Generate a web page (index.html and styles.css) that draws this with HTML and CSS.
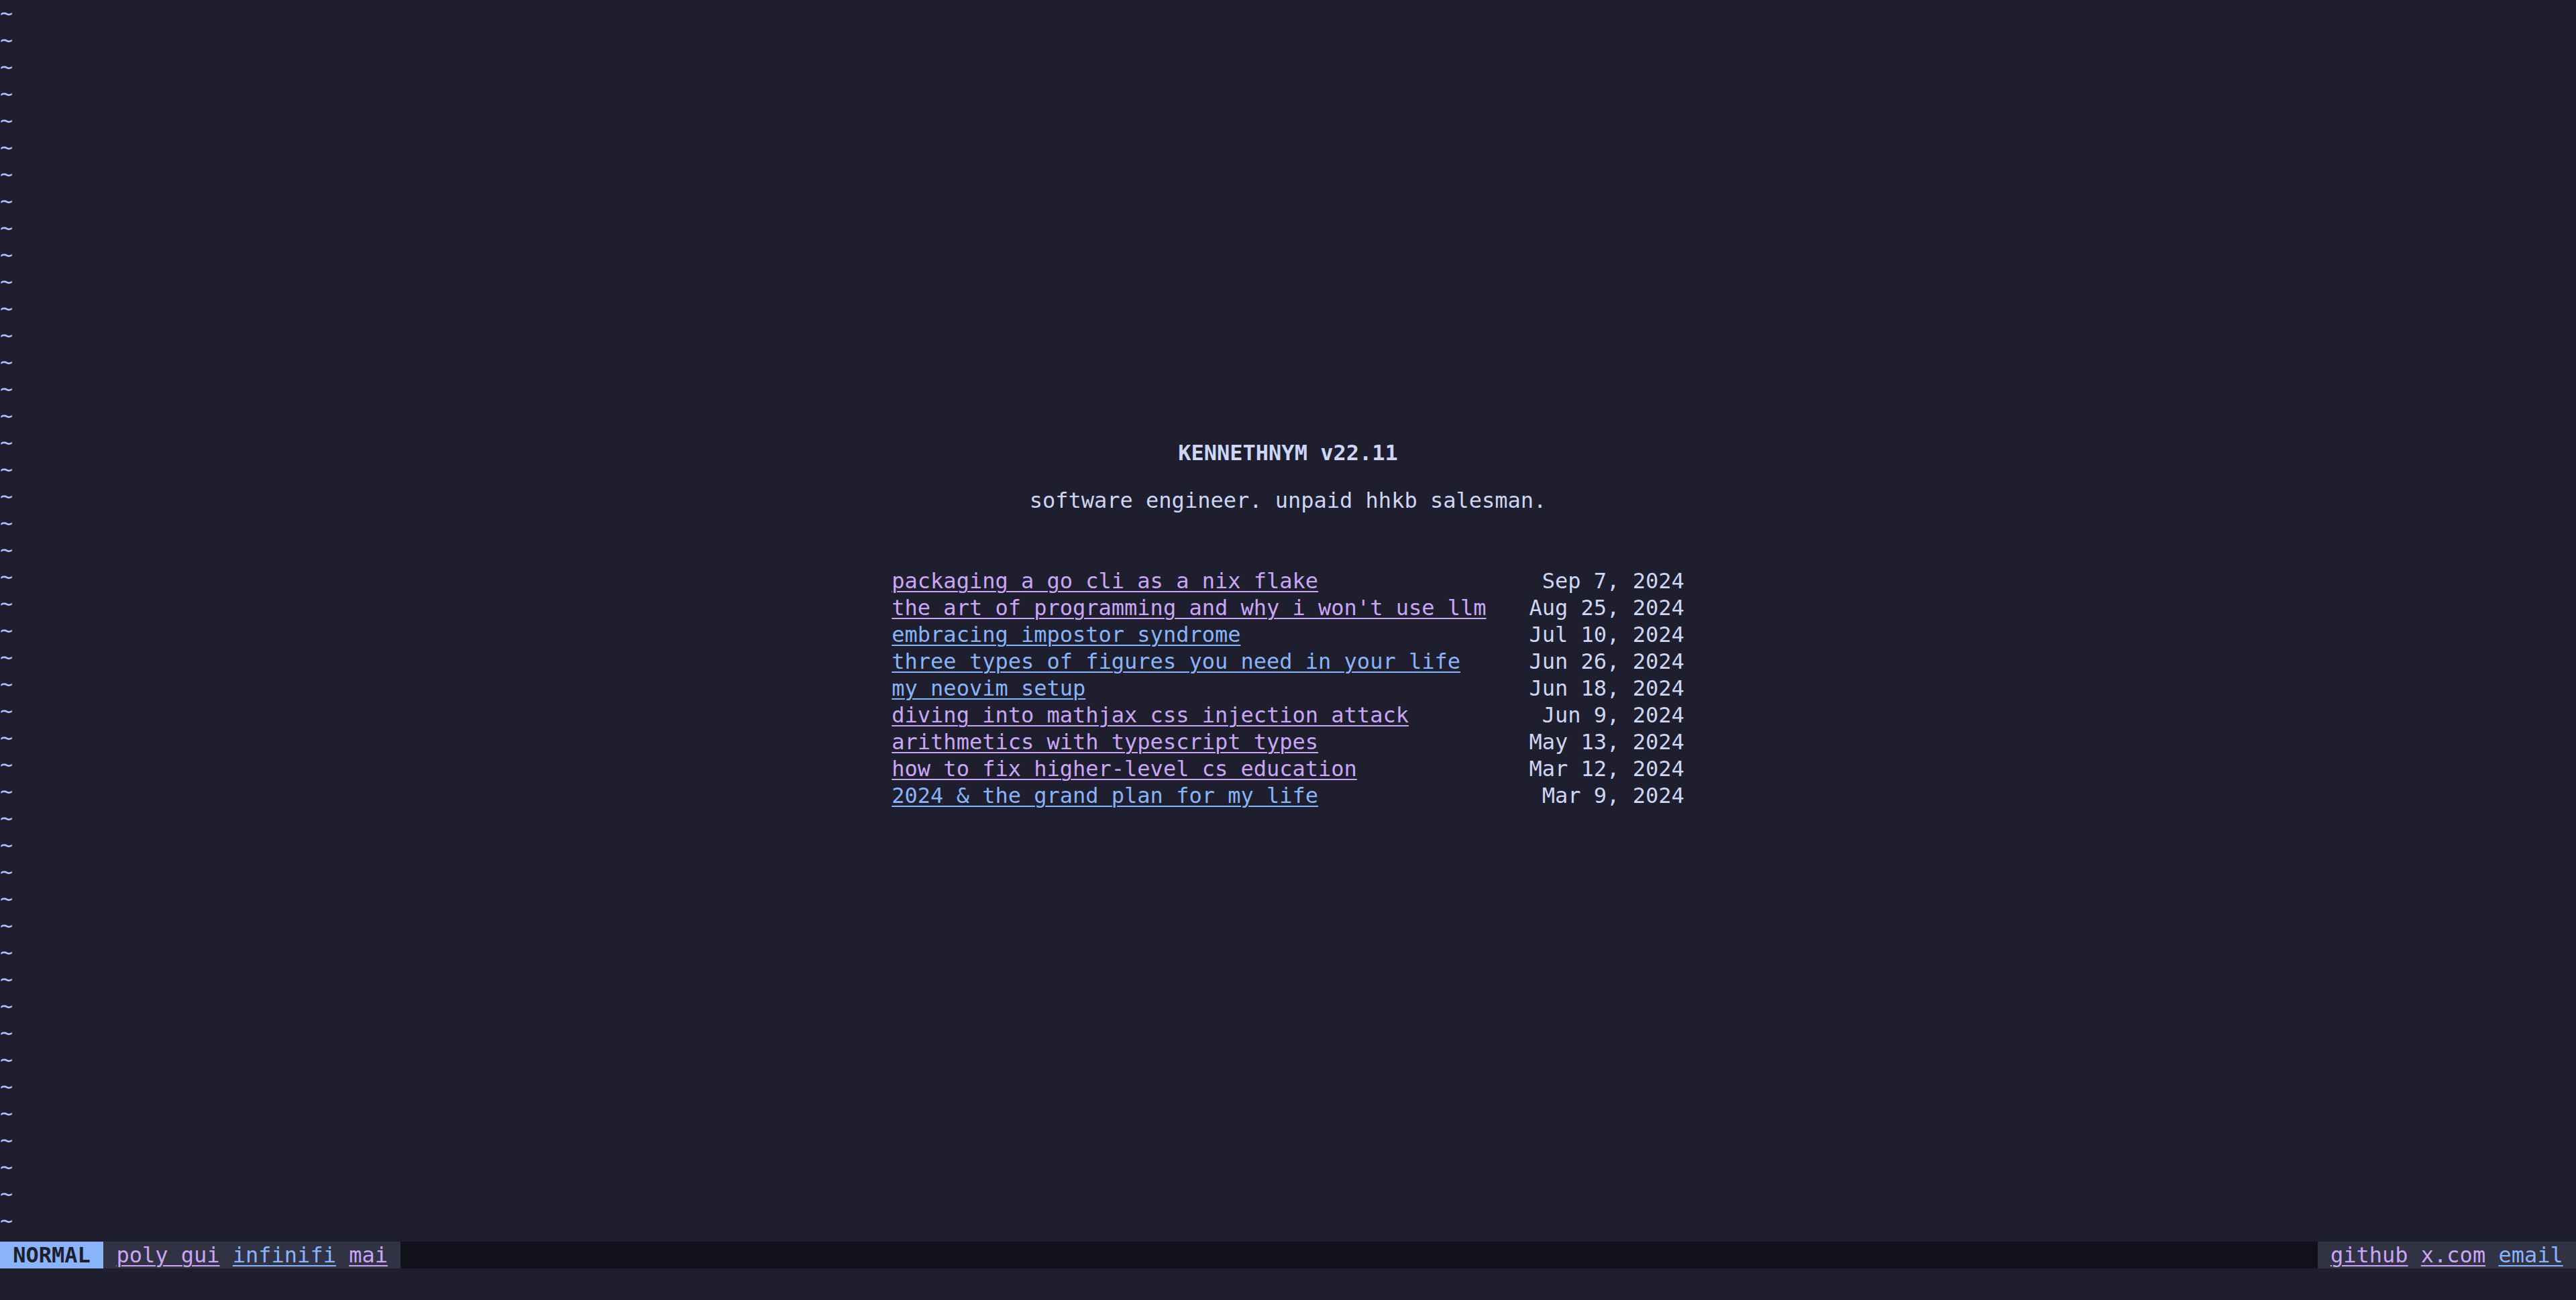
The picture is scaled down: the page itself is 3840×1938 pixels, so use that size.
FILE: index.html
```html
<!DOCTYPE html>
<html lang="en">
<head>
<meta charset="utf-8">
<title>kennethnym</title>
<link rel="stylesheet" href="styles.css">
</head>
<body>
<div class="screen">
  <main class="buffer">
    <div class="gutter">
      <div>~</div><div>~</div><div>~</div><div>~</div><div>~</div><div>~</div><div>~</div><div>~</div><div>~</div><div>~</div>
      <div>~</div><div>~</div><div>~</div><div>~</div><div>~</div><div>~</div><div>~</div><div>~</div><div>~</div><div>~</div>
      <div>~</div><div>~</div><div>~</div><div>~</div><div>~</div><div>~</div><div>~</div><div>~</div><div>~</div><div>~</div>
      <div>~</div><div>~</div><div>~</div><div>~</div><div>~</div><div>~</div><div>~</div><div>~</div><div>~</div><div>~</div>
      <div>~</div><div>~</div><div>~</div><div>~</div><div>~</div><div>~</div>
    </div>
    <div class="content">
      <h1 class="title">KENNETHNYM v22.11</h1>
      <p class="tagline">software engineer. unpaid hhkb salesman.</p>
      <ul class="posts">
        <li><a class="link mauve" href="#">packaging a go cli as a nix flake</a><span class="date">Sep 7, 2024</span></li>
        <li><a class="link mauve" href="#">the art of programming and why i won't use llm</a><span class="date">Aug 25, 2024</span></li>
        <li><a class="link blue" href="#">embracing impostor syndrome</a><span class="date">Jul 10, 2024</span></li>
        <li><a class="link blue" href="#">three types of figures you need in your life</a><span class="date">Jun 26, 2024</span></li>
        <li><a class="link blue" href="#">my neovim setup</a><span class="date">Jun 18, 2024</span></li>
        <li><a class="link mauve" href="#">diving into mathjax css injection attack</a><span class="date">Jun 9, 2024</span></li>
        <li><a class="link mauve" href="#">arithmetics with typescript types</a><span class="date">May 13, 2024</span></li>
        <li><a class="link mauve" href="#">how to fix higher-level cs education</a><span class="date">Mar 12, 2024</span></li>
        <li><a class="link blue" href="#">2024 &amp; the grand plan for my life</a><span class="date">Mar 9, 2024</span></li>
      </ul>
    </div>
    <div class="gutter-pad"></div>
  </main>
  <footer class="statusline">
    <span class="mode">NORMAL</span>
    <nav class="section">
      <a class="link mauve" href="#">poly gui</a>
      <a class="link blue" href="#">infinifi</a>
      <a class="link mauve" href="#">mai</a>
    </nav>
    <span class="fill"></span>
    <nav class="section">
      <a class="link mauve" href="#">github</a>
      <a class="link mauve" href="#">x.com</a>
      <a class="link blue" href="#">email</a>
    </nav>
  </footer>
  <div class="cmdline"></div>
</div>
</body>
</html>
```
FILE: styles.css
```css
html, body {
  margin: 0;
  padding: 0;
  background: #1e1e2e;
}

body {
  font-family: "DejaVu Sans Mono", "Liberation Mono", monospace;
  font-size: 32px;
  line-height: 40px;
  color: #cdd6f4;
}

.screen {
  height: 100vh;
  display: flex;
  flex-direction: column;
  overflow: hidden;
}

.buffer {
  flex: 1;
  min-height: 0;
  overflow: hidden;
  display: grid;
  grid-template-columns: 1ch 1fr 1ch;
  grid-template-rows: 100%;
}

.gutter {
  color: #b4befe;
  overflow: hidden;
}

.content {
  display: flex;
  flex-direction: column;
  align-items: center;
  justify-content: center;
  padding-top: 10px;
}

.title {
  margin: 0;
  font-size: 32px;
  line-height: 40px;
  font-weight: bold;
  color: #cdd6f4;
}

.tagline {
  margin: 31px 0 0;
}

.posts {
  list-style: none;
  margin: 80px 0 0;
  padding: 0;
  display: grid;
  grid-template-columns: max-content max-content;
  column-gap: 64px;
}

.posts li {
  display: contents;
}

.date {
  text-align: right;
  white-space: pre;
}

.link {
  text-decoration: underline;
  text-decoration-thickness: 2px;
  text-underline-offset: 4px;
  white-space: pre;
}

.mauve { color: #cba6f7; }
.blue { color: #89b4fa; }

.statusline {
  flex: none;
  height: 40px;
  display: flex;
  background: #11111b;
}

.mode {
  background: #89b4fa;
  color: #1e1e2e;
  font-weight: bold;
  padding: 0 1ch;
}

.section {
  background: #313244;
  display: flex;
  gap: 1ch;
  padding: 0 1ch;
}

.fill {
  flex: 1;
}

.cmdline {
  flex: none;
  height: 47px;
}
```
